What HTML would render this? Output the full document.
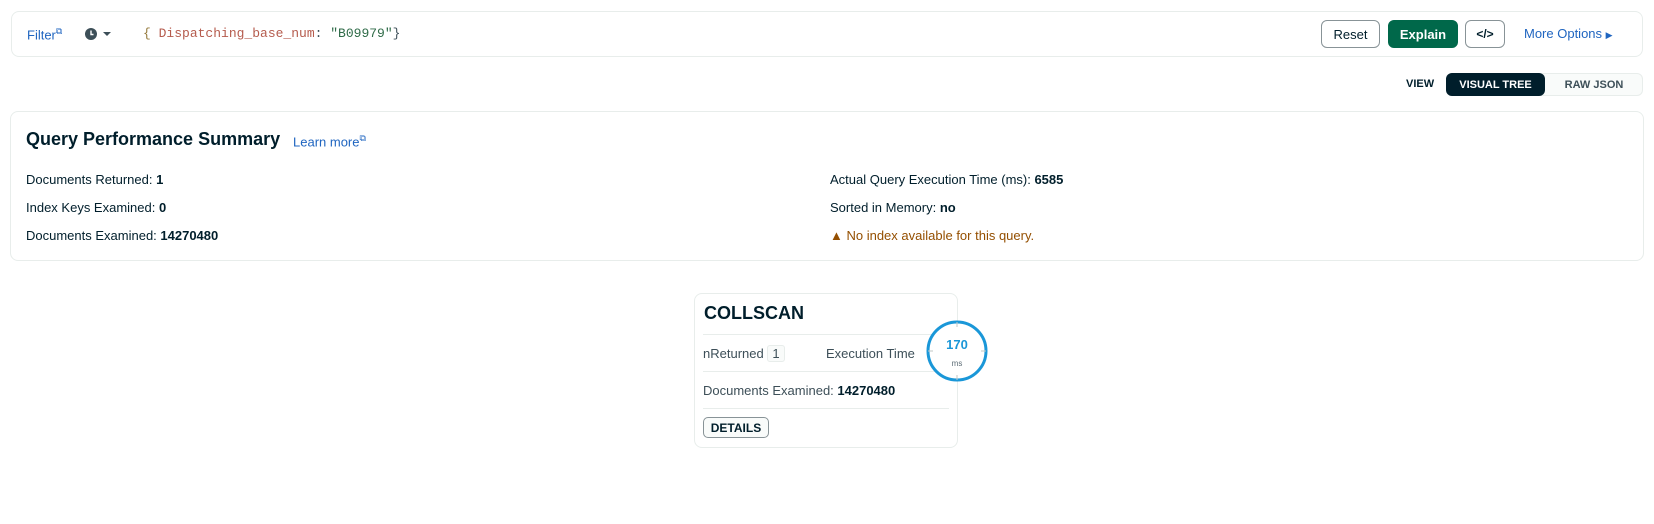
<!DOCTYPE html>
<html><head><meta charset="utf-8"><style>
*{box-sizing:border-box;margin:0;padding:0}
body{width:1654px;height:524px;background:#fff;font-family:"Liberation Sans",sans-serif;color:#001e2b;position:relative;overflow:hidden;font-size:13px}
.abs{position:absolute}
.card{position:absolute;border:1px solid #e8edeb;border-radius:8px;background:#fff}
.mono{font-family:"Liberation Mono",monospace;font-size:13px}
.btn{position:absolute;border:1px solid #889397;border-radius:6px;height:28px;display:flex;align-items:center;justify-content:center;font-size:13px;background:#fff}
.row{position:absolute;font-size:13px;white-space:nowrap}
b{font-weight:bold}
</style></head><body>
<div class="card" style="left:11px;top:11px;width:1632px;height:46px"></div>
<div class="abs" style="left:27px;top:26px;color:#1f65c0;font-size:13px">Filter<sup style="font-size:9px">&#x29C9;</sup></div>
<svg class="abs" style="left:85px;top:27px" width="30" height="14"><circle cx="6" cy="7" r="6" fill="#3d4f58"/><path d="M6 3.5V7.5H8.5" stroke="#fff" stroke-width="1.4" fill="none"/><path d="M18 5h8l-4 4z" fill="#3d4f58"/></svg>
<div class="abs mono" style="left:143px;top:26px;white-space:nowrap"><span style="color:#94793b">{ </span><span style="color:#b55b4d">Dispatching_base_num</span><span style="color:#3d4f58">: </span><span style="color:#2f6b48">"B09979"</span><span style="color:#3d4f58">}</span></div>
<div class="btn" style="left:1321px;top:20px;width:59px">Reset</div>
<div class="btn" style="left:1388px;top:20px;width:70px;background:#00684a;border-color:#00684a;color:#fff;font-weight:bold">Explain</div>
<div class="btn" style="left:1465px;top:20px;width:40px;font-weight:bold;font-size:12px">&lt;/&gt;</div>
<div class="abs" style="left:1524px;top:26px;color:#1f65c0">More Options <span style="font-size:9px">&#9654;</span></div>
<div class="abs" style="left:1406px;top:78px;font-size:11px;font-weight:bold">VIEW</div>
<div class="abs" style="left:1446px;top:73px;width:197px;height:23px;border:1px solid #e8edeb;border-radius:6px;background:#f9fbfa"></div>
<div class="abs" style="left:1446px;top:73px;width:99px;height:23px;border-radius:6px;background:#001e2b;color:#fff;font-size:11px;font-weight:bold;display:flex;align-items:center;justify-content:center">VISUAL TREE</div>
<div class="abs" style="left:1545px;top:73px;width:98px;height:23px;color:#3d4f58;font-size:11px;font-weight:bold;display:flex;align-items:center;justify-content:center">RAW JSON</div>

<div class="card" style="left:10px;top:111px;width:1634px;height:150px"></div>
<div class="abs" style="left:26px;top:129px;font-size:18px;font-weight:bold">Query Performance Summary</div>
<div class="abs" style="left:293px;top:133px;color:#1f65c0">Learn more<sup style="font-size:9px">&#x29C9;</sup></div>
<div class="row" style="left:26px;top:172px">Documents Returned: <b>1</b></div>
<div class="row" style="left:26px;top:200px">Index Keys Examined: <b>0</b></div>
<div class="row" style="left:26px;top:228px">Documents Examined: <b>14270480</b></div>
<div class="row" style="left:830px;top:172px">Actual Query Execution Time (ms): <b>6585</b></div>
<div class="row" style="left:830px;top:200px">Sorted in Memory: <b>no</b></div>
<div class="row" style="left:830px;top:228px;color:#944f01">&#9650; No index available for this query.</div>

<div class="card" style="left:694px;top:293px;width:264px;height:155px"></div>
<div class="abs" style="left:704px;top:303px;font-size:18px;font-weight:bold">COLLSCAN</div>
<div class="abs" style="left:703px;top:334px;width:246px;border-top:1px solid #e8edeb"></div>
<div class="row" style="left:703px;top:346px;color:#3d4f58">nReturned <span style="border:1px solid #e8edeb;background:#f9fbfa;border-radius:3px;padding:0 4px">1</span></div>
<div class="row" style="left:826px;top:346px;color:#3d4f58">Execution Time</div>
<div class="abs" style="left:703px;top:371px;width:246px;border-top:1px solid #e8edeb"></div>
<div class="row" style="left:703px;top:383px;color:#3d4f58">Documents Examined: <b style="color:#001e2b">14270480</b></div>
<div class="abs" style="left:703px;top:408px;width:246px;border-top:1px solid #e8edeb"></div>
<div class="abs" style="left:703px;top:417px;width:66px;height:21px;border:1px solid #889397;border-radius:5px;font-size:12px;font-weight:bold;display:flex;align-items:center;justify-content:center;background:#f9fbfa">DETAILS</div>
<svg class="abs" style="left:925px;top:319px" width="64" height="64"><circle cx="32" cy="32" r="29" fill="#fff" stroke="#1a97d8" stroke-width="3"/><path d="M32 3v5M32 56v5M3 32h5M56 32h5" stroke="#c1c7c6" stroke-width="1"/><text x="32" y="30" text-anchor="middle" font-family="Liberation Sans" font-size="13" font-weight="bold" fill="#1a97d8">170</text><text x="32" y="47" text-anchor="middle" font-family="Liberation Sans" font-size="8" fill="#5c6c75">ms</text></svg>
</body></html>
